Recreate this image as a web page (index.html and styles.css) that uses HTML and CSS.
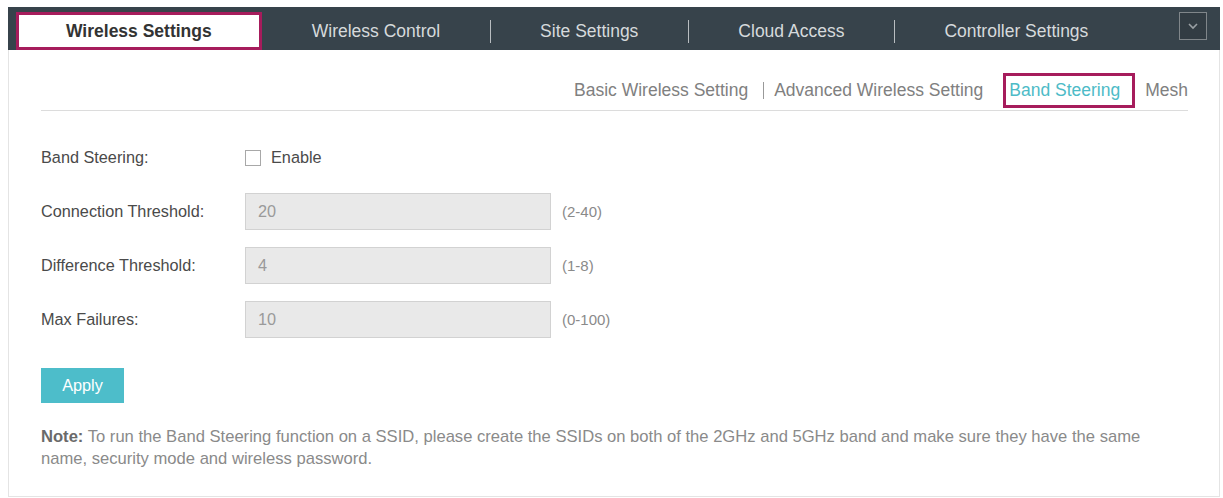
FILE: index.html
```html
<!DOCTYPE html>
<html>
<head>
<meta charset="utf-8">
<link rel="stylesheet" href="styles.css">
</head>
<body>
<div class="panel">
  <div class="topbar">
    <div class="tab active">Wireless Settings</div>
    <div class="tab">Wireless Control</div>
    <div class="tab sep">Site Settings</div>
    <div class="tab sep">Cloud Access</div>
    <div class="tab sep">Controller Settings</div>
    <div class="dropdown">
      <svg width="12" height="8" viewBox="0 0 12 8"><path d="M2 2 L6 6 L10 2" fill="none" stroke="#9aa0a4" stroke-width="1.6"/></svg>
    </div>
  </div>
  <div class="content">
    <div class="subnav">
      <span class="sub">Basic Wireless Setting</span>
      <span class="bar"></span>
      <span class="sub">Advanced Wireless Setting</span>
      <span class="sub current">Band Steering</span>
      <span class="sub mesh">Mesh</span>
    </div>
    <div class="form">
      <div class="row">
        <div class="label">Band Steering:</div>
        <span class="checkbox"></span>
        <span class="enable">Enable</span>
      </div>
      <div class="row">
        <div class="label">Connection Threshold:</div>
        <div class="input">20</div>
        <span class="range">(2-40)</span>
      </div>
      <div class="row">
        <div class="label">Difference Threshold:</div>
        <div class="input">4</div>
        <span class="range">(1-8)</span>
      </div>
      <div class="row">
        <div class="label">Max Failures:</div>
        <div class="input">10</div>
        <span class="range">(0-100)</span>
      </div>
    </div>
    <div class="apply">Apply</div>
    <p class="note"><b>Note:</b> To run the Band Steering function on a SSID, please create the SSIDs on both of the 2GHz and 5GHz band and make sure they have the same name, security mode and wireless password.</p>
  </div>
</div>
</body>
</html>
```
FILE: styles.css
```css
* { box-sizing: border-box; }
html, body { margin: 0; background: #fff; }
body {
  padding: 7px 3px 0 8px;
  font-family: "Liberation Sans", Arial, sans-serif;
}
.panel {
  width: 1212px;
  height: 490px;
  border: 1px solid #e4e4e4;
  border-top: 0;
}
.topbar {
  margin: 0 -1px;
  height: 43px;
  background: #37434b;
  display: flex;
  align-items: flex-start;
  padding: 5px 0 0 8px;
}
.tab {
  height: 38px;
  padding: 0 50px;
  display: flex;
  align-items: center;
  font-size: 17.5px;
  color: #d6dadc;
  position: relative;
  white-space: nowrap;
}
.tab.active {
  background: #fff;
  border: 3px solid #a61c5c;
  padding: 0 47px;
  color: #333;
  font-weight: bold;
}
.tab.sep::before {
  content: "";
  position: absolute;
  left: 0;
  top: 8px;
  height: 23px;
  border-left: 1px solid #b8bdc0;
}
.dropdown {
  margin: 0 13px 0 auto;
  width: 28px;
  height: 28px;
  border: 1px solid #80868a;
  background: #323c43;
  display: flex;
  align-items: center;
  justify-content: center;
}
.content {
  padding: 0 31px 0 32px;
}
.subnav {
  display: flex;
  justify-content: flex-end;
  align-items: center;
  padding: 23px 0 2px;
  border-bottom: 1px solid #dcdcdc;
}
.sub {
  font-size: 17.5px;
  color: #808080;
  height: 35px;
  display: flex;
  align-items: center;
  white-space: nowrap;
}
.bar {
  height: 17px;
  border-left: 1px solid #999;
  margin: 0 10px 0 15px;
}
.sub.current {
  color: #4dbbc7;
  border: 3px solid #a61c5c;
  padding: 0 12px 0 3px;
  margin-left: 20px;
}
.sub.mesh { margin-left: 10px; }
.form {
  margin-top: 28px;
  display: flex;
  flex-direction: column;
  gap: 17px;
}
.row {
  height: 37px;
  display: flex;
  align-items: center;
  font-size: 16.25px;
}
.label {
  width: 204px;
  color: #4a4a4a;
}
.checkbox {
  width: 16px;
  height: 16px;
  border: 1px solid #a8a8a8;
  background: #fff;
  margin-right: 10px;
}
.enable { color: #4a4a4a; }
.input {
  width: 306px;
  height: 37px;
  background: #e9e9e9;
  border: 1px solid #d2d2d2;
  color: #9a9a9a;
  padding-left: 12px;
  display: flex;
  align-items: center;
}
.range {
  margin-left: 11px;
  font-size: 15px;
  color: #8a8a8a;
}
.apply {
  margin-top: 30px;
  width: 83px;
  height: 35px;
  background: #4dbdca;
  color: #fff;
  font-size: 16.25px;
  display: flex;
  align-items: center;
  justify-content: center;
}
.note {
  margin: 23px 0 0;
  max-width: 1112px;
  font-size: 16.6px;
  line-height: 22px;
  color: #8a8a8a;
}
.note b { color: #6a6a6a; }
```
